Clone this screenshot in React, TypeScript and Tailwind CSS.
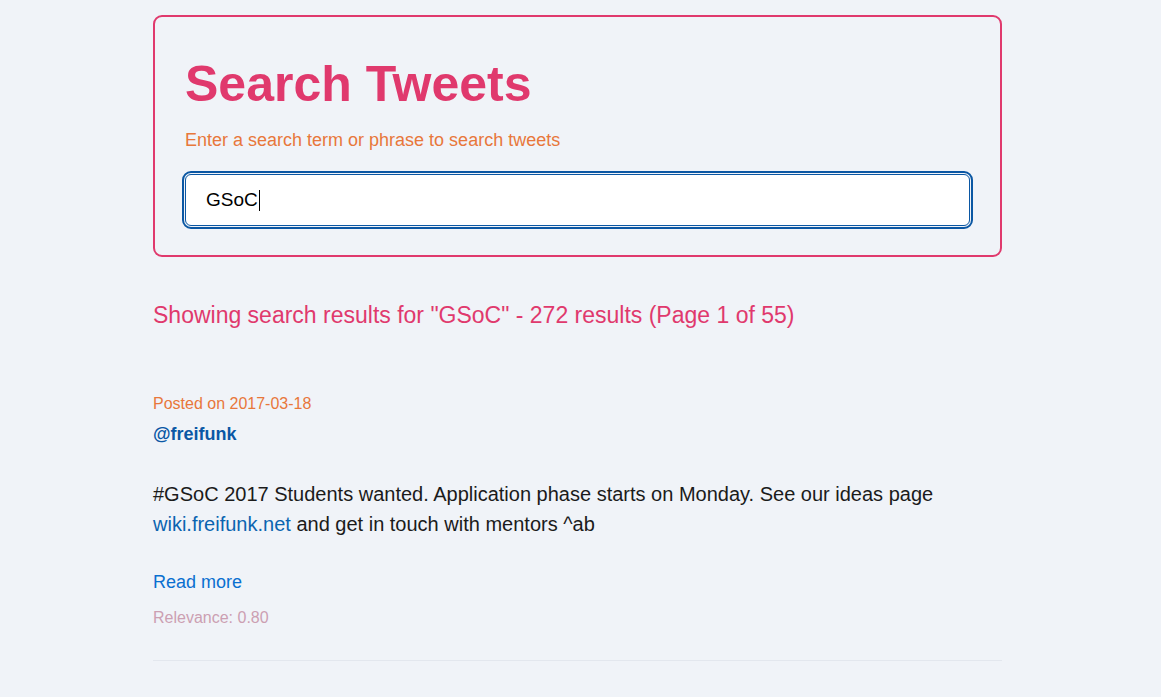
import React from "react";

export default function App() {
  return (
    <div
      className="min-h-[697px] w-full bg-[#f0f3f8]"
      style={{ fontFamily: '"Liberation Sans", Arial, sans-serif' }}
    >
      <div className="ml-[153px] w-[849px] pt-[15px]">
        <div className="rounded-[9px] border-2 border-[#e0396d] px-[30px] pt-[42px] pb-[29px]">
          <h1 className="text-[50px] leading-[50px] font-bold text-[#e0396d]">Search Tweets</h1>
          <p className="mt-[19px] text-[18px] leading-[24px] text-[#e8773b]">
            Enter a search term or phrase to search tweets
          </p>
          <div className="mt-[22px] flex h-[52px] items-center rounded-[6px] border border-[#0b57a3] bg-white px-[20px] text-[19px] text-black outline-2 outline-offset-1 outline-[#0b57a3]">
            <span>GSoC</span>
            <span className="ml-px inline-block h-[21px] w-px bg-black" />
          </div>
        </div>

        <h2 className="mt-[42px] text-[23px] leading-[32px] text-[#e0396d]">
          Showing search results for "GSoC" - 272 results (Page 1 of 55)
        </h2>

        <div className="mt-[61px] border-b border-[#e3e7ee] pb-[30px]">
          <div className="text-[16px] leading-[24px] text-[#e8773b]">Posted on 2017-03-18</div>
          <div className="mt-[6px] text-[18px] leading-[24px] font-bold text-[#0a57a5]">@freifunk</div>
          <p className="mt-[33px] text-[20px] leading-[30px] text-[#1b1b1b]">
            #GSoC 2017 Students wanted. Application phase starts on Monday. See our ideas page{" "}
            <span className="text-[#0b64b0]">wiki.freifunk.net</span> and get in touch with mentors ^ab
          </p>
          <div className="mt-[31px] text-[18px] leading-[24px] text-[#0a6fd0]">Read more</div>
          <div className="mt-[12px] text-[16px] leading-[24px] text-[#cc9fb2]">Relevance: 0.80</div>
        </div>
      </div>
    </div>
  );
}
